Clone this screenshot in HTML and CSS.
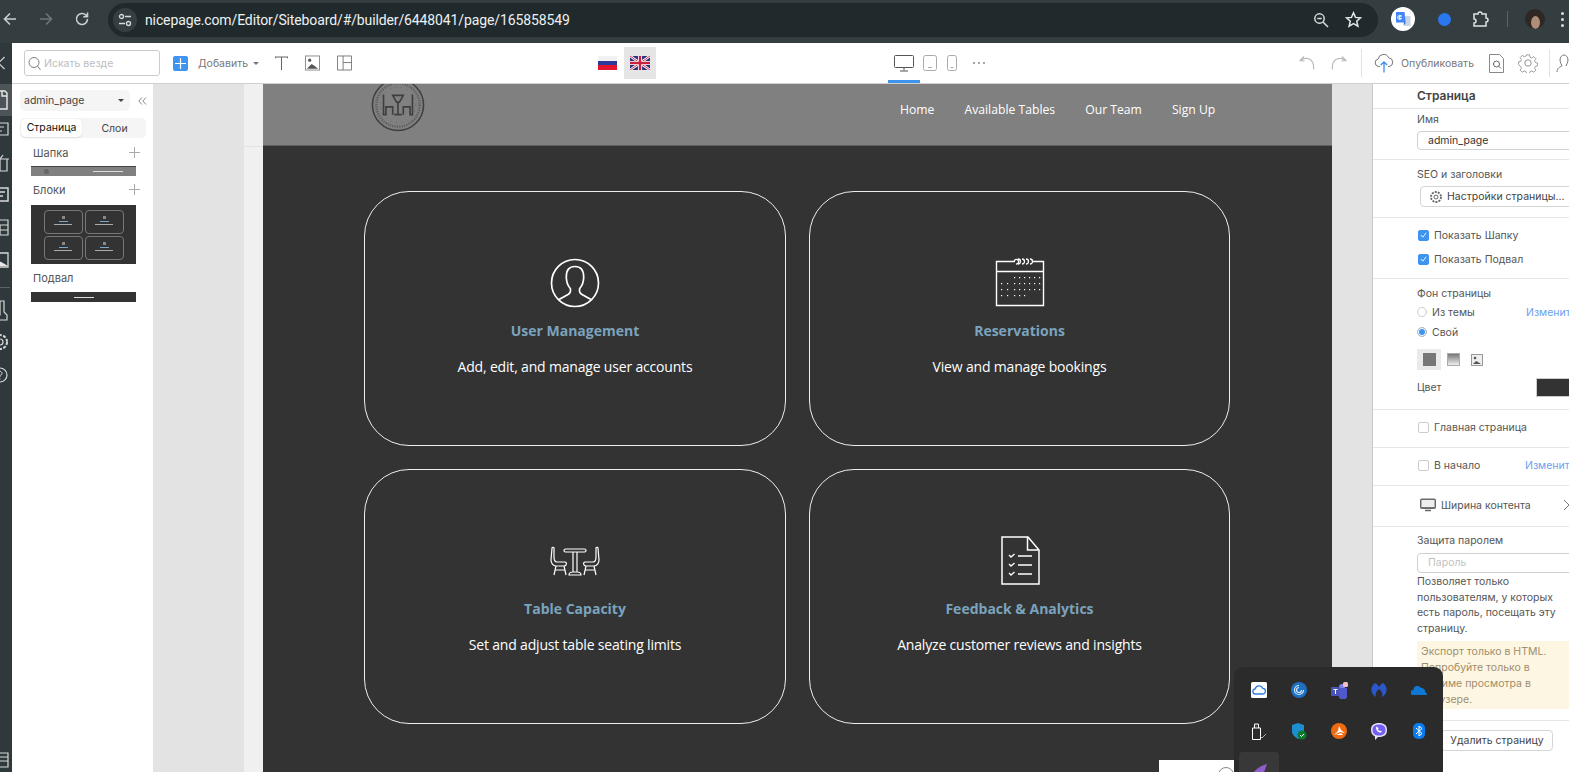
FILE: index.html
```html
<!DOCTYPE html>
<html lang="ru">
<head>
<meta charset="utf-8">
<title>Nicepage</title>
<link rel="stylesheet" href="styles.css">
</head>
<body>
<header class="chrome">
  <svg class="cico back" width="16" height="16" viewBox="0 0 16 16"><path d="M14 8H2.500M8 2.500 2.500 8 8 13.500" fill="none" stroke="#c9d0d3" stroke-width="1.600"/></svg>
  <svg class="cico fwd" width="16" height="16" viewBox="0 0 16 16"><path d="M2 8h11.500M8 2.500 13.500 8 8 13.500" fill="none" stroke="#6c7679" stroke-width="1.600"/></svg>
  <svg class="cico reload" width="16" height="16" viewBox="0 0 16 16"><path d="M13.500 8a5.500 5.500 0 1 1-1.600-3.900L13.500 5.700M13.500 1.500v4.200H9.300" fill="none" stroke="#c9d0d3" stroke-width="1.600"/></svg>
  <div class="omnibox">
    <span class="tune"><svg width="14" height="14" viewBox="0 0 14 14"><g fill="none" stroke="#d5dadc" stroke-width="1.300"><circle cx="3.500" cy="3.500" r="2"/><path d="M7 3.500h6M1 10.500h6"/><circle cx="10.500" cy="10.500" r="2"/></g></svg></span>
    <span class="url">nicepage.com/Editor/Siteboard/#/builder/6448041/page/165858549</span>
    <svg class="zoomglass" width="16" height="16" viewBox="0 0 16 16"><g fill="none" stroke="#d5dadc" stroke-width="1.500"><circle cx="6.500" cy="6.500" r="4.700"/><path d="M10 10l5 5M4.300 6.500h4.400"/></g></svg>
    <svg class="star" width="17" height="17" viewBox="0 0 17 17"><path d="M8.500 1.800l2 4.600 5 .5-3.800 3.300 1.200 4.900-4.400-2.600-4.400 2.600 1.200-4.900L1.500 6.900l5-.5z" fill="none" stroke="#e3e7e8" stroke-width="1.500"/></svg>
  </div>
  <span class="translate"><svg width="16" height="16" viewBox="0 0 16 16"><path d="M8 5h7.500v10H9z" fill="#c9d4e6"/><path d="M1 1h8.500l1.200 10.500H1z" fill="#4285f4"/><path d="M9 11.500h1.700L8.800 14.500z" fill="#2a5db0"/><path d="M7 5H4.300v2.300H6.500A2 2 0 1 1 6 5" fill="none" stroke="#fff"/></svg></span>
  <span class="bluedot"></span>
  <svg class="puzzle" width="18" height="18" viewBox="0 0 18 18"><path d="M2 4h4a2 2 0 0 1 4 0h4v4a2 2 0 0 1 0 4v4H2v-3a2 2 0 0 0 0-4z" fill="none" stroke="#dfe3e5" stroke-width="1.500"/></svg>
  <span class="csep"></span>
  <span class="avatar"><span class="avatar-face"></span></span>
  <span class="kebab"><i></i><i></i><i></i></span>
</header>

<div class="toolbar">
  <span class="rail-top"><svg width="8" height="14" viewBox="0 0 8 14"><path d="M6.500 1L.5 7l6 6" fill="none" stroke="#d8d8d8" stroke-width="1.200"/></svg></span>
  <label class="search">
    <svg width="13" height="15" viewBox="0 0 13 15"><g fill="none" stroke="#7f7f7f" stroke-width="1"><circle cx="6" cy="6.500" r="5"/><path d="M9.500 10l3 4"/></g></svg>
    <span>Искать везде</span>
  </label>
  <span class="addbtn"><svg width="11" height="11" viewBox="0 0 11 11"><path d="M5.500 0v11M0 5.500h11" stroke="#fff" stroke-width="1.200"/></svg></span>
  <span class="addlabel">Добавить</span>
  <span class="caret"></span>
  <svg class="t-text" width="13" height="16" viewBox="0 0 14 16"><path d="M.5 1.500h13M7 1.500V15.500M.5 1v2M13.500 1v2" fill="none" stroke="#666" stroke-width="1.100"/></svg>
  <svg class="t-img" width="15" height="16" viewBox="0 0 16 16"><rect x=".5" y=".5" width="15" height="15" fill="#fff" stroke="#888"/><circle cx="5" cy="5" r="1.700" fill="#555"/><path d="M2 14l5-5 3 2 4 3z" fill="#555"/></svg>
  <svg class="t-layout" width="15" height="16" viewBox="0 0 16 16"><path d="M.5.500h15v15H.5zM6.500.500v15M6.500 7.500h9" fill="none" stroke="#777"/></svg>
  <span class="flag-ru"><i class="fw"></i><i class="fb"></i><i class="fr"></i></span>
  <span class="flag-box">
    <svg width="20" height="14" viewBox="0 0 20 14"><rect width="20" height="14" fill="#28307c"/><path d="M0 0l20 14M20 0L0 14" stroke="#fff" stroke-width="2.600"/><path d="M0 0l20 14M20 0L0 14" stroke="#c9203f" stroke-width=".9"/><path d="M10 0v14M0 7h20" stroke="#fff" stroke-width="4.200"/><path d="M10 0v14M0 7h20" stroke="#c9203f" stroke-width="2.400"/></svg>
  </span>
  <span class="device active"><svg width="20" height="17" viewBox="0 0 20 17"><path d="M1.500.500h17a1 1 0 0 1 1 1v10a1 1 0 0 1-1 1h-17a1 1 0 0 1-1-1v-10a1 1 0 0 1 1-1zM10 12.500v3M6 16h8" fill="none" stroke="#555"/></svg></span>
  <svg class="tablet" width="14" height="16" viewBox="0 0 14 16"><rect x=".5" y=".5" width="13" height="15" rx="2" fill="none" stroke="#aaa"/><path d="M5 12.500h4" stroke="#aaa"/></svg>
  <svg class="phone" width="10" height="16" viewBox="0 0 10 16"><rect x=".5" y=".5" width="9" height="15" rx="2" fill="none" stroke="#aaa"/><path d="M3.500 12.500h3" stroke="#aaa"/></svg>
  <span class="moredots"><i></i><i></i><i></i></span>
  <svg class="undo" width="16" height="16" viewBox="0 0 16 16"><path d="M5 1.500L1 5.500l4.500.5M1.500 5.500C4 3.500 8 3 11 4.500c3 1.700 4 5 3.500 10" fill="none" stroke="#bbb" stroke-width="1.200"/></svg>
  <svg class="redo" width="16" height="16" viewBox="0 0 16 16"><path d="M11 1.500l4 4-4.500.5M14.500 5.500C12 3.500 8 3 5 4.500c-3 1.700-4 5-3.500 10" fill="none" stroke="#bbb" stroke-width="1.200"/></svg>
  <span class="tsep sep1"></span>
  <svg class="cloud" width="20" height="20" viewBox="0 0 20 20"><path d="M6 13.500H4.500a3.800 3.800 0 0 1-.3-7.500 5.500 5.500 0 0 1 10.500-1.200 4.400 4.400 0 0 1 .5 8.700H14" fill="none" stroke="#777"/><path d="M10 19.500V9M6.800 12L10 9l3.200 3" fill="none" stroke="#3f8fe8" stroke-width="1.300"/></svg>
  <span class="publish">Опубликовать</span>
  <svg class="pdoc" width="15" height="19" viewBox="0 0 15 19"><path d="M.5.500h10l4 4v14H.5z" fill="none" stroke="#888"/><circle cx="7.500" cy="10" r="3" fill="none" stroke="#666"/><path d="M9.700 12.200l2.300 2.300" stroke="#666"/></svg>
  <svg class="pgear" width="20" height="20" viewBox="0 0 20 20"><g fill="none" stroke="#888" stroke-width=".9"><circle cx="10" cy="10" r="3.200"/><path d="M8.400 1h3.200l.6 2.700 1.900.8 2.400-1.500 2.200 2.300-1.400 2.300.8 1.900 2.400.6v3.200l-2.400.6-.8 1.900 1.400 2.300-2.200 2.300-2.400-1.500-1.900.8-.6 2.700H8.400l-.6-2.700-1.900-.8-2.400 1.500-2.200-2.300 1.400-2.300-.8-1.900L-.5 12V8.800l2.400-.6.800-1.900L1.300 4l2.200-2.300 2.400 1.500 1.900-.8z" transform="translate(1 .9) scale(.9)"/></g></svg>
  <span class="tsep sep2"></span>
  <svg class="pperson" width="16" height="20" viewBox="0 0 16 20"><path d="M1 19c0-4 3-5 5-6 0-1-2-3-2-6 0-3 2-5 4-5s4 2 4 5c0 3-2 5-2 6" fill="none" stroke="#777"/></svg>
</div>

<div class="workspace">
  <nav class="rail">
    <svg class="r-active" width="12" height="32" viewBox="10 0 12 32"><path d="M8 7h7l2 2 0 0v16H8zM12 7v5h5" fill="none" stroke="#e8e8e8" stroke-width="1.400"/></svg>
    <svg class="r-ico" width="20" height="32" viewBox="0 0 20 32"><path d="M2 9h16v12H6l-3 3zM6 13h8M6 17h6" fill="none" stroke="#d8d8d8" stroke-width="1.200"/></svg>
    <svg class="r-ico" width="20" height="32" viewBox="0 0 20 32"><path d="M3 12h14v12H3zM1 12h18M10 12v12M7 8l3 4 3-4" fill="none" stroke="#d8d8d8" stroke-width="1.200"/></svg>
    <svg class="r-ico" width="20" height="32" viewBox="0 0 20 32"><path d="M2 9h16v13H2zM5 13h10M5 17h8" fill="none" stroke="#d8d8d8" stroke-width="1.500"/></svg>
    <svg class="r-ico" width="20" height="32" viewBox="0 0 20 32"><path d="M2 8h16v5H2zM2 13h8v5H2zM10 13h8v5h-8zM2 18h8v5H2zM10 18h8v5h-8z" fill="none" stroke="#d8d8d8" stroke-width="1.200"/></svg>
    <svg class="r-ico" width="20" height="32" viewBox="0 0 20 32"><path d="M2 9h16v14H2z" fill="none" stroke="#d8d8d8" stroke-width="1.300"/><circle cx="7" cy="13" r="2" fill="#e8e8e8"/><path d="M3 22l6-5 4 2 5 3z" fill="#e8e8e8"/></svg>
    <span class="r-sep"></span>
    <svg class="r-ico r-tool" width="20" height="32" viewBox="0 0 20 32"><path d="M10 7h4v11l3 3v5H4v-5h6z" fill="none" stroke="#d8d8d8" stroke-width="1.200"/></svg>
    <svg class="r-ico" width="20" height="32" viewBox="0 0 20 32"><circle cx="10" cy="16" r="3" fill="none" stroke="#d8d8d8" stroke-width="1.200"/><circle cx="10" cy="16" r="7" fill="none" stroke="#d8d8d8" stroke-width="2" stroke-dasharray="3 1.500"/></svg>
    <svg class="r-ico" width="20" height="32" viewBox="0 0 20 32"><circle cx="10" cy="16" r="7" fill="none" stroke="#d8d8d8" stroke-width="1.200"/><path d="M8 14a2 2 0 1 1 3 2c-1 .5-1 1-1 2M10 19.500v1" fill="none" stroke="#d8d8d8"/></svg>
    <svg class="r-ico r-last" width="20" height="20" viewBox="0 0 20 20"><path d="M2 3h16v14H2zM2 7h16M2 11h16" fill="none" stroke="#d8d8d8" stroke-width="1.200"/></svg>
  </nav>

  <aside class="panel">
    <div class="panel-top">
      <div class="pageselect"><span>admin_page</span><i class="caret dark"></i></div>
      <svg class="collapse" width="9" height="8" viewBox="0 0 9 8"><path d="M4 .5L.8 4 4 7.500M8 .5L4.800 4 8 7.500" fill="none" stroke="#888"/></svg>
    </div>
    <div class="tabs"><span class="tab on">Страница</span><span class="tab">Слои</span></div>
    <div class="sec-head"><span>Шапка</span><span class="plus"></span></div>
    <div class="thumb thumb-head"><i class="th-logo"></i><i class="th-nav"></i></div>
    <div class="sec-head second"><span>Блоки</span><span class="plus"></span></div>
    <div class="thumb thumb-body">
      <div class="th-card"><i class="tc-ic"></i><i class="tc-ti"></i><i class="tc-tx"></i></div>
      <div class="th-card"><i class="tc-ic"></i><i class="tc-ti"></i><i class="tc-tx"></i></div>
      <div class="th-card"><i class="tc-ic"></i><i class="tc-ti"></i><i class="tc-tx"></i></div>
      <div class="th-card"><i class="tc-ic"></i><i class="tc-ti"></i><i class="tc-tx"></i></div>
    </div>
    <div class="sec-head third"><span>Подвал</span></div>
    <div class="thumb thumb-foot"><i class="th-foot"></i></div>
  </aside>

  <main class="canvas">
    <div class="gutter"><span class="gutter-line"></span></div>
    <div class="page">
      <div class="site-header">
        <svg class="logo" width="54" height="54" viewBox="0 0 56 56">
          <g fill="none" stroke="#3f3f3f">
            <circle cx="28" cy="28" r="26.500" stroke-width="1.600"/>
            <circle cx="28" cy="28" r="18.500" stroke-width=".4" stroke-dasharray="1 5"/>
            <circle cx="28" cy="28" r="22.500" stroke-width="2.400" stroke-dasharray="1.300 1.200" opacity=".55"/>
            <path d="M13 17v21h2.500v-8h7v8M43 17v21h-2.500v-8h-7v8M22.500 18h11l-4 7h-3zM28 25v12M24 38h8" stroke-width="1.700"/>
          </g>
        </svg>
        <ul class="site-nav">
          <li>Home</li><li>Available Tables</li><li>Our Team</li><li>Sign Up</li>
        </ul>
      </div>
      <div class="site-body">
        <section class="card">
          <svg class="card-ico" width="50" height="50" viewBox="0 0 50 50"><g fill="none" stroke="#fff" stroke-width="1.700"><circle cx="25" cy="25" r="23.500"/><path d="M9 41.500l9-5c2.500-1.500 3-3.500 2.300-6-2.600-3-4-6-4-11.500C16.300 12 19 8.500 25 8.500S33.700 12 33.700 19c0 5.500-1.400 8.500-4 11.500-.7 2.500-.2 4.500 2.300 6l9 5"/></g></svg>
          <h3>User Management</h3>
          <p>Add, edit, and manage user accounts</p>
        </section>
        <section class="card">
          <svg class="card-ico" width="50" height="50" viewBox="0 0 50 50"><g fill="none" stroke="#fff"><path d="M15 3.500H1.500v44h47v-44H40M1.500 13.500h47" stroke-width="1.400"/><path d="M15 3.500h5M19 3.500a2.300 2.300 0 1 1 2 2.500M23 1a2.500 2.500 0 0 1 0 5M27 1a2.500 2.500 0 0 1 0 5M31 1a2.500 2.500 0 0 1 0 5M35 1a2.500 2.500 0 0 1 0 5M37 3.500h3" stroke-width="1.300"/></g><g fill="#fff"><rect x="19" y="19" width="1.200" height="1.200"/><rect x="24" y="19" width="1.200" height="1.200"/><rect x="29" y="19" width="1.200" height="1.200"/><rect x="34" y="19" width="1.200" height="1.200"/><rect x="39" y="19" width="1.200" height="1.200"/><rect x="44" y="19" width="1.200" height="1.200"/><rect x="6" y="25" width="1.200" height="1.200"/><rect x="12" y="25" width="1.200" height="1.200"/><rect x="19" y="25" width="1.200" height="1.200"/><rect x="24" y="25" width="1.200" height="1.200"/><rect x="29" y="25" width="1.200" height="1.200"/><rect x="34" y="25" width="1.200" height="1.200"/><rect x="39" y="25" width="1.200" height="1.200"/><rect x="44" y="25" width="1.200" height="1.200"/><rect x="6" y="31" width="1.200" height="1.200"/><rect x="12" y="31" width="1.200" height="1.200"/><rect x="19" y="31" width="1.200" height="1.200"/><rect x="24" y="31" width="1.200" height="1.200"/><rect x="29" y="31" width="1.200" height="1.200"/><rect x="34" y="31" width="1.200" height="1.200"/><rect x="39" y="31" width="1.200" height="1.200"/><rect x="44" y="31" width="1.200" height="1.200"/><rect x="6" y="37" width="1.200" height="1.200"/><rect x="12" y="37" width="1.200" height="1.200"/><rect x="19" y="37" width="1.200" height="1.200"/><rect x="24" y="37" width="1.200" height="1.200"/><rect x="29" y="37" width="1.200" height="1.200"/></g></svg>
          <h3>Reservations</h3>
          <p>View and manage bookings</p>
        </section>
        <section class="card">
          <svg class="card-ico" width="50" height="50" viewBox="0 0 50 50"><g fill="none" stroke="#fff" stroke-width="1.200"><path d="M2 12c0-1 2-1 2 0v9c0 3 1 5 3 5h8c2 0 2 4-1 4H6c-3 0-5-3-5-6z"/><path d="M6 30l-2 9M14 30l2 9M5 34h10M48 12c0-1-2-1-2 0v9c0 3-1 5-3 5h-8c-2 0-2 4 1 4h8c3 0 5-3 5-6z"/><path d="M44 30l2 9M36 30l-2 9M45 34H35"/><rect x="14" y="13" width="22" height="3" rx="1.500"/><path d="M23 16v20M27 16v20M19 39c0-2 2-3 4-3h4c2 0 4 1 4 3z"/></g></svg>
          <h3>Table Capacity</h3>
          <p>Set and adjust table seating limits</p>
        </section>
        <section class="card">
          <svg class="card-ico" width="50" height="50" viewBox="0 0 50 50"><g fill="none" stroke="#fff"><path d="M7 1h26l11 13v34H7zM32.500 1v13H44" stroke-width="1.500"/><path d="M14 19l2 2 3.500-3M23 20h14M14 28l2 2 3.500-3M23 29h14M14 37l2 2 3.500-3M23 38h14" stroke-width="1.300"/></g></svg>
          <h3>Feedback &amp; Analytics</h3>
          <p>Analyze customer reviews and insights</p>
        </section>
      </div>
    </div>
  </main>

  <aside class="props">
    <div class="prop-title">Страница</div>
    <div class="pgroup pg-name">
      <div class="plabel">Имя</div>
      <div class="pinput">admin_page</div>
    </div>
    <div class="pgroup pg-seo">
      <div class="plabel">SEO и заголовки</div>
      <div class="pbutton"><svg width="14" height="14" viewBox="0 0 14 14"><g fill="none" stroke="#666"><circle cx="7" cy="7" r="2"/><circle cx="7" cy="7" r="5" stroke-width="1.800" stroke-dasharray="2 1.100"/></g></svg>Настройки страницы...</div>
    </div>
    <div class="pgroup pg-check">
      <div class="checkrow"><span class="chk on"><svg width="12" height="12" viewBox="0 0 12 12"><path d="M2.500 6l2.500 3 4.500-6" fill="none" stroke="#fff" stroke-width="1.200"/></svg></span>Показать Шапку</div>
      <div class="checkrow"><span class="chk on"><svg width="12" height="12" viewBox="0 0 12 12"><path d="M2.500 6l2.500 3 4.500-6" fill="none" stroke="#fff" stroke-width="1.200"/></svg></span>Показать Подвал</div>
    </div>
    <div class="pgroup pg-bg">
      <div class="plabel">Фон страницы</div>
      <div class="radiorow"><span class="radio"></span><span class="rlabel">Из темы</span><a class="plink">Изменить</a></div>
      <div class="radiorow"><span class="radio on"></span><span class="rlabel">Свой</span></div>
      <div class="bgtypes">
        <span class="bgtype on"><i class="bg-solid"></i></span>
        <span class="bgtype"><i class="bg-grad"></i></span>
        <span class="bgtype"><svg width="12" height="12" viewBox="0 0 12 12"><rect width="12" height="12" fill="#999"/><rect x="1" y="1" width="10" height="10" fill="#eee"/><circle cx="4" cy="4" r="1.300" fill="#555"/><path d="M2 10l3-3 2 1 3 2z" fill="#555"/></svg></span>
      </div>
      <div class="colorrow"><span class="colorlabel">Цвет</span><i class="swatch"></i></div>
    </div>
    <div class="pgroup pg-home"><div class="checkrow"><span class="chk"></span>Главная страница</div></div>
    <div class="pgroup pg-home"><div class="checkrow"><span class="chk"></span><span class="rlabel2">В начало</span><a class="plink">Изменить</a></div></div>
    <div class="pgroup pg-width">
      <svg class="wmon" width="16" height="14" viewBox="0 0 16 14"><rect x=".5" y="1" width="15" height="9.500" rx="1" fill="#777" stroke="#666"/><rect x="1.500" y="2" width="13" height="7" fill="#eee"/><path d="M5 12.500h6" stroke="#666" stroke-width="1.500"/></svg>
      <span>Ширина контента</span>
      <svg class="chev" width="7" height="12" viewBox="0 0 7 12"><path d="M1 1l5 5-5 5" fill="none" stroke="#777"/></svg>
    </div>
    <div class="pgroup pg-pass">
      <div class="plabel">Защита паролем</div>
      <div class="pinput ghost">Пароль</div>
      <p class="phelp">Позволяет только пользователям, у которых есть пароль, посещать эту страницу.</p>
      <div class="notice">Экспорт только в HTML. Попробуйте только в режиме просмотра в браузере.</div>
    </div>
    <div class="pg-delete"><span class="delbtn">Удалить страницу</span></div>
  </aside>
</div>

<div class="taskchip"><span class="chip-circle"></span></div>
<div class="tray">
  <span class="tray-i"><svg width="16" height="16" viewBox="0 0 16 16"><rect width="16" height="16" rx="1.500" fill="#fff"/><path d="M4.500 12a2.500 2.500 0 0 1-.3-5 4 4 0 0 1 7.600-.6A2.800 2.800 0 0 1 11.500 12z" fill="none" stroke="#2f7de1" stroke-width="1.300"/></svg></span>
  <span class="tray-i"><svg width="16" height="16" viewBox="0 0 16 16"><circle cx="8" cy="8" r="8" fill="#1f6fc4"/><path d="M12.500 8A4.500 4.500 0 1 1 8 3.500M10.500 8A2.500 2.500 0 1 1 8 5.500" fill="none" stroke="#d9ecff" stroke-width="1.200"/></svg></span>
  <span class="tray-i"><svg width="17" height="17" viewBox="0 0 17 17"><circle cx="11" cy="5" r="3" fill="#7b83eb"/><path d="M6 6h10v7a4 4 0 0 1-8 2z" fill="#5059c9"/><rect y="5" width="9" height="9" rx="1" fill="#4b53bc"/><path d="M2.500 7.500h4M4.500 7.500v4.500" stroke="#fff"/><rect x="12" y="0" width="5" height="5" rx="1.500" fill="#f3c0c8"/></svg></span>
  <span class="tray-i"><svg width="16" height="16" viewBox="0 0 16 16"><path d="M4 1C1 3 0 6 .5 9 1 12 3 14 5 15c-1-3 0-6 3-8 3 2 4 5 3 8 2-1 4-3 4.500-6 .5-3-.5-6-3.500-8-2 1-3 2-4 4-1-2-2-3-4-4z" fill="#2b57c9"/></svg></span>
  <span class="tray-i"><svg width="16" height="10" viewBox="0 0 16 10"><path d="M2 10a2.500 2.500 0 0 1 .5-5A4 4 0 0 1 10 3a3.500 3.500 0 0 1 4 4c1 .3 2 1.500 2 3z" fill="#0f78d4"/></svg></span>
  <span class="tray-i"><svg width="15" height="17" viewBox="0 0 15 17"><path d="M.5 5h8v11.500H.5zM2.500 5V1h4v4M3.800 3h.6" fill="none" stroke="#fff"/><path d="M8.500 13.500l1.500 1.500 4-4" fill="none" stroke="#aaa"/></svg></span>
  <span class="tray-i"><svg width="16" height="17" viewBox="0 0 16 17"><path d="M7 0l6 2v6c0 4-3 6-6 8-3-2-6-4-6-8V2z" fill="#1d8fd1"/><circle cx="11" cy="12" r="4.500" fill="#0b7a2c"/><path d="M9 12l1.500 1.500L13 11" fill="none" stroke="#fff"/></svg></span>
  <span class="tray-i"><svg width="16" height="16" viewBox="0 0 16 16"><circle cx="8" cy="8" r="8" fill="#f06a0f"/><path d="M8 3l2 4 4 3-5-1-6 3 4-4zM5 12l5-2 2 2z" fill="#fff"/></svg></span>
  <span class="tray-i"><svg width="16" height="17" viewBox="0 0 16 17"><path d="M8 0c5 0 8 2 8 7s-3 7-8 7H7l-3 3v-3.500C1 12 0 10 0 7c0-5 3-7 8-7z" fill="#e6e2f5"/><path d="M8 1.500c4 0 6.500 1.500 6.500 5.500S12 12.500 8 12.500 1.500 11 1.500 7 4 1.500 8 1.500z" fill="#7360f2"/><path d="M5 4.500c0 3 2 5 5 5l1-1-2-1-1 .5-1-1.500.5-1L6 3.500z" fill="#fff"/></svg></span>
  <span class="tray-i"><svg width="12" height="16" viewBox="0 0 12 16"><rect width="12" height="16" rx="5" fill="#0a7cf0"/><path d="M3 5l6 5.500L6 13V3l3 2.500L3 11" fill="none" stroke="#fff"/></svg></span>
  <span class="tray-i hovered"><svg width="18" height="16" viewBox="0 0 18 16"><path d="M17 0C9 2 3 7 0 15c2-2 4-2 7-3 1 1 1 3 1 4h3c2-5 4-10 6-16z" fill="#8d5ec9"/></svg></span>
</div>
</body>
</html>
```

FILE: styles.css
```css
* { box-sizing: border-box; }
html, body { margin: 0; padding: 0; height: 772px; overflow: hidden; }
body { font-family: Inter, "Liberation Sans", sans-serif; background: #fff; color: #444; position: relative; }
i { display: block; }

/* browser chrome */
.chrome { height: 43px; background: #343e41; display: flex; align-items: center; padding-bottom: 5px; }
.cico { flex: none; }
.back { margin-left: 2px; }
.fwd { margin-left: 20px; }
.reload { margin-left: 20px; }
.omnibox { margin-left: 18px; width: 1270px; height: 34px; margin-top: 1px; border-radius: 17px; background: #202a2d; display: flex; align-items: center; padding: 0 16px 0 5px; flex: none; }
.tune { width: 24px; height: 24px; border-radius: 50%; background: #353f43; display: flex; align-items: center; justify-content: center; flex: none; }
.url { margin-left: 8px; font: 14px/1 Roboto, sans-serif; letter-spacing: -.12px; color: #eef1f2; flex: 1; }
.star { margin-left: 16px; }
.translate { width: 24px; height: 24px; margin-left: 13px; border-radius: 50%; background: #fff; display: flex; align-items: center; justify-content: center; flex: none; }
.bluedot { width: 13px; height: 13px; border-radius: 50%; background: #2a78f0; margin-left: 23px; flex: none; }
.puzzle { margin-left: 21px; flex: none; }
.csep { width: 1px; height: 16px; background: #5a6568; margin-left: 17px; flex: none; }
.avatar { width: 20px; height: 20px; border-radius: 50%; background: #2f2723; margin-left: 17px; flex: none; display: flex; justify-content: center; align-items: flex-end; overflow: hidden; }
.avatar-face { width: 9px; height: 13px; border-radius: 50%; background: #b08d76; }
.kebab { margin-left: 16px; display: flex; flex-direction: column; gap: 3px; flex: none; }
.kebab i { width: 3px; height: 3px; border-radius: 50%; background: #d8dcde; }

/* toolbar */
.toolbar { height: 41px; background: #fff; border-bottom: 1px solid #cfcfcf; display: flex; align-items: center; position: relative; }
.rail-top { width: 12px; height: 41px; margin-bottom: -1px; background: #2f383b; flex: none; display: flex; align-items: center; overflow: hidden; padding-bottom: 2px; }
.rail-top svg { margin-left: -2px; flex: none; }
.search { margin-left: 12px; width: 136px; height: 26px; border: 1px solid #ccc; border-radius: 3px; display: flex; align-items: center; padding-left: 3px; gap: 3px; font-size: 10.500px; color: #bdbdbd; flex: none; }
.addbtn { margin-left: 13px; width: 15px; height: 15px; background: #3f94f0; border-radius: 2px; display: flex; align-items: center; justify-content: center; flex: none; }
.addlabel { margin-left: 10px; font-size: 10.500px; color: #777; flex: none; }
.caret { margin-left: 5px; width: 0; height: 0; border: 3px solid transparent; border-top: 3px solid #777; border-bottom: 0; flex: none; }
.t-text { margin-left: 16px; flex: none; }
.t-img { margin-left: 17px; flex: none; }
.t-layout { margin-left: 17px; flex: none; }
.flag-ru { margin-left: 246px; width: 19px; height: 14px; display: flex; flex-direction: column; flex: none; }
.flag-ru i { flex: 1; }
.fw { background: #f1f1f3; }
.fb { background: #2b3a9a; }
.fr { background: #e5142d; }
.flag-box { margin-left: 7px; width: 32px; height: 32px; background: #e5e5e5; display: flex; align-items: center; justify-content: center; flex: none; }
.device { margin-left: 232px; width: 32px; height: 40px; display: flex; align-items: center; justify-content: center; flex: none; }
.device.active { border-bottom: 3px solid #3f94f0; padding-top: 3px; }
.tablet { margin-left: 3px; flex: none; }
.phone { margin-left: 10px; flex: none; }
.moredots { margin-left: 16px; display: flex; gap: 3px; flex: none; }
.moredots i { width: 2px; height: 2px; background: #888; border-radius: 50%; }
.undo { margin-left: 314px; flex: none; }
.redo { margin-left: 16px; flex: none; }
.tsep { width: 1px; height: 28px; background: #e2e2e2; flex: none; }
.sep1 { margin-left: 14px; }
.cloud { margin-left: 12px; flex: none; }
.publish { margin-left: 7px; font-size: 10.500px; color: #777; flex: none; }
.pdoc { margin-left: 15px; flex: none; }
.pgear { margin-left: 14px; flex: none; }
.sep2 { margin-left: 11px; }
.pperson { margin-left: 6px; flex: none; }

/* workspace */
.workspace { display: flex; height: 688px; overflow: hidden; }
.rail { width: 12px; flex: none; background: #2f383b; display: flex; flex-direction: column; overflow: hidden; }
.r-ico { flex: none; margin-left: -10px; margin-bottom: .5px; }
.r-active { flex: none; background: #4c5457; margin-bottom: -2px; }
.r-sep { width: 10px; height: 1px; background: #5a6366; margin: 10px 0 3px; flex: none; }
.r-tool { margin-top: 3px; }
.r-last { margin-top: auto; margin-bottom: 2px; }

/* left panel */
.panel { width: 141px; flex: none; background: #fff; padding: 6px 0 0 8px; }
.panel-top { display: flex; align-items: center; }
.pageselect { width: 110px; height: 21px; border-radius: 5px; background: #f5f5f5; display: flex; align-items: center; justify-content: space-between; padding: 0 6px 0 4px; font-size: 10.500px; color: #444; }
.caret.dark { border-top-color: #444; margin: 0; }
.collapse { margin-left: 8px; flex: none; }
.tabs { margin-top: 7px; width: 126px; height: 20px; padding: 1px; background: #f5f5f5; border-radius: 5px; display: flex; align-items: center; font-size: 10.500px; color: #444; }
.tab { flex: 1; text-align: center; padding-left: 2px; }
.tab.on { flex: none; width: 61px; height: 18px; line-height: 18px; padding: 0; background: #fff; border-radius: 5px; color: #111; box-shadow: 0 1px 2px rgba(0,0,0,.1); }
.sec-head { margin: 7px 0 0 13px; width: 107px; height: 15px; display: flex; align-items: center; justify-content: space-between; font-size: 11px; color: #555; }
.sec-head.second { margin-top: 6px; }
.sec-head.third { margin-top: 6px; }
.plus { width: 11px; height: 11px; background: linear-gradient(#aaa,#aaa) center/11px 1px no-repeat, linear-gradient(#aaa,#aaa) center/1px 11px no-repeat; }
.thumb { margin: 6px 0 0 11px; width: 105px; }
.thumb-head { height: 10px; background: #808080; border-top: 1px solid #444; display: flex; align-items: center; justify-content: space-between; padding: 0 13px; }
.th-logo { width: 5px; height: 5px; border-radius: 50%; background: #666; }
.th-nav { width: 30px; height: 1px; background: #ddd; }
.thumb-body { height: 59px; background: #333; margin-top: 8px; display: grid; grid-template-columns: 39px 39px; gap: 2px 2px; justify-content: center; align-content: center; }
.th-card { height: 24px; border: 1px solid #777; border-radius: 4px; display: flex; flex-direction: column; align-items: center; padding-top: 5px; gap: 2px; }
.tc-ic { width: 3px; height: 3px; background: #888; }
.tc-ti { width: 9px; height: 1px; background: #7ba6c6; }
.tc-tx { width: 18px; height: 1px; background: #aaa; }
.thumb-foot { height: 10px; background: #333; margin-top: 7px; display: flex; align-items: center; justify-content: center; }
.th-foot { width: 20px; height: 1px; background: #ddd; }

/* canvas */
.canvas { flex: 1; min-width: 0; background: #e3e3e3; border-right: 1px solid #c8c8c8; padding-left: 91px; display: flex; overflow: hidden; }
.gutter { width: 19px; flex: none; background: #f0f0f0; padding-top: 62px; }
.gutter-line { display: block; height: 1px; background: #e3e3e3; }
.page { width: 1069px; flex: none; display: flex; flex-direction: column; }
.site-header { height: 62px; background: #808080; border-bottom: 1px solid #5e5e5e; display: flex; align-items: flex-start; overflow: hidden; padding-left: 108px; }
.logo { margin-top: -6px; flex: none; }
.site-nav { list-style: none; margin: 0 0 0 475px; padding: 17px 0 0; display: flex; gap: 30px; font: 12.200px/18px "Open Sans", sans-serif; color: #fff; }
.site-body { flex: 1; background: #333; padding: 45px 101px 0 101px; display: grid; grid-template-columns: 422px 421px; grid-template-rows: 255px 255px; gap: 23px; align-content: start; }
.card { border: 1px solid #eee; border-radius: 45px; display: flex; flex-direction: column; align-items: center; padding-top: 66px; color: #fff; }
.card-ico { flex: none; }
.card h3 { margin: 14px 0 0; font: 700 14px/18px "Open Sans", sans-serif; color: #7ba3be; }
.card p { margin: 18px 0 0; font: 14px/18px "Open Sans", sans-serif; color: #fff; letter-spacing: -.18px; }

/* properties */
.props { width: 196px; flex: none; background: #fff; overflow: hidden; font-size: 10.500px; color: #555; }
.prop-title { height: 25px; padding: 4px 0 0 44px; border-bottom: 1px solid #e6e6e6; font-size: 12px; font-weight: 600; color: #444; }
.pgroup { border-bottom: 1px solid #e6e6e6; padding-left: 44px; }
.plabel { line-height: 14px; color: #555; }
.pinput { width: 180px; height: 19px; border: 1px solid #d0d0d0; border-radius: 4px; padding-left: 10px; line-height: 17px; color: #333; margin-top: 4px; }
.pg-name { height: 51px; padding-top: 4px; }
.pg-seo { height: 58px; padding-top: 8px; }
.pbutton { margin: 4px 0 0 3px; width: 180px; height: 21px; border: 1px solid #d5d5d5; border-radius: 4px; display: flex; align-items: center; padding-left: 8px; gap: 4px; color: #444; }
.pg-check { height: 61px; padding-top: 10px; display: flex; flex-direction: column; gap: 10px; }
.checkrow { display: flex; align-items: center; height: 14px; gap: 5px; white-space: nowrap; }
.chk { width: 11px; height: 11px; border: 1px solid #ccc; border-radius: 2px; margin-left: 1px; flex: none; display: flex; align-items: center; justify-content: center; }
.chk.on { background: #3f94f0; border-color: #3f94f0; }
.pg-bg { height: 131px; padding-top: 8px; }
.radiorow { display: flex; align-items: center; height: 14px; margin-top: 4px; white-space: nowrap; }
.radiorow + .radiorow { margin-top: 6px; }
.radio { width: 10px; height: 10px; border: 1px solid #ccc; border-radius: 50%; margin-right: 5px; flex: none; }
.radio.on { background: #3f94f0; box-shadow: inset 0 0 0 1px #fff; border-color: #bbb; }
.rlabel { width: 94px; flex: none; }
.rlabel2 { width: 86px; flex: none; }
.plink { color: #6b9ff0; flex: none; }
.bgtypes { display: flex; margin-top: 10px; }
.bgtype { width: 24px; height: 21px; display: flex; align-items: center; justify-content: center; flex: none; }
.bgtype.on { background: #eaeaea; }
.bg-solid { width: 13px; height: 13px; background: #777; }
.bg-grad { width: 13px; height: 13px; background: linear-gradient(#777,#eee); border: 1px solid #aaa; }
.colorrow { display: flex; align-items: center; height: 19px; margin-top: 8px; }
.colorlabel { width: 119px; flex: none; }
.swatch { width: 40px; height: 19px; background: #333; border: 1px solid #ccc; flex: none; }
.pg-home { height: 38px; display: flex; align-items: center; padding-bottom: 2px; }
.pg-width { height: 41px; display: flex; align-items: center; gap: 5px; padding-left: 47px; padding-bottom: 2px; white-space: nowrap; }
.wmon { flex: none; }
.pg-width .chev { margin-left: 27px; flex: none; }
.pg-pass { height: 194px; padding-top: 7px; }
.pg-pass .pinput { margin-top: 5px; height: 20px; }
.ghost { color: #c2c2c2; }
.phelp { margin: 1px 0 0; width: 156px; line-height: 15.700px; color: #555; }
.notice { margin-top: 4px; width: 180px; height: 68px; background: #fdf6e3; padding: 3px 47px 0 4px; line-height: 16px; color: #a08e6b; }
.pg-delete { padding: 9px 0 0 44px; }
.delbtn { display: block; margin-left: 24px; width: 112px; height: 21px; line-height: 19px; border: 1px solid #d5d5d5; border-radius: 4px; text-align: center; color: #444; }

/* overlays */
.taskchip { position: absolute; left: 1159px; top: 760px; width: 76px; height: 12px; background: #fff; overflow: hidden; }
.chip-circle { position: absolute; left: 59px; top: 7px; width: 16px; height: 16px; border: 1px solid #888; border-radius: 50%; }
.tray { position: absolute; left: 1234px; top: 667px; width: 209px; height: 105px; background: #2b2b2b; border-radius: 9px 9px 0 0; padding: 3px 5px 0; display: grid; grid-template-columns: repeat(5, 40px); grid-auto-rows: 40px; gap: 1px 0; }
.tray-i { display: flex; align-items: center; justify-content: center; border-radius: 4px; }
.hovered { background: #383838; align-items: flex-start; padding-top: 12px; }
```
